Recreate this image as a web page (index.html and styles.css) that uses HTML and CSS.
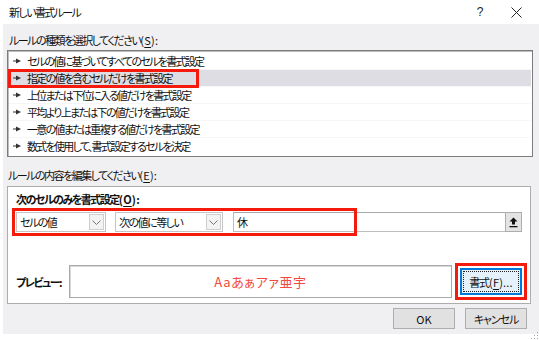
FILE: index.html
```html
<!DOCTYPE html>
<html lang="ja">
<head>
<meta charset="utf-8">
<title>新しい書式ルール</title>
<link rel="stylesheet" href="styles.css">
</head>
<body>
<div class="win">
  <div class="titlebar">
    <span class="title">新しい書式ルール</span>
    <span class="help">?</span>
    <span class="close"><svg width="11" height="11" viewBox="0 0 11 11"><path d="M0.5 0.5 L10.5 10.5 M10.5 0.5 L0.5 10.5" stroke="#222" stroke-width="1" fill="none"/></svg></span>
  </div>
  <div class="body">
    <div class="lbl">ルールの種類を選択してください<span class="lat">(<u>S</u>):</span></div>
    <div class="list">
      <div class="item"><svg class="arr" width="8" height="6" viewBox="0 0 8 6"><rect x="0" y="2.5" width="4" height="1" fill="#333"/><polygon points="3,0.5 8,3 3,5.5" fill="#333"/></svg><span>セルの値に基づいてすべてのセルを書式設定</span></div>
      <div class="item sel"><svg class="arr" width="8" height="6" viewBox="0 0 8 6"><rect x="0" y="2.5" width="4" height="1" fill="#333"/><polygon points="3,0.5 8,3 3,5.5" fill="#333"/></svg><span>指定の値を含むセルだけを書式設定</span><span class="mark mark-item"></span></div>
      <div class="item"><svg class="arr" width="8" height="6" viewBox="0 0 8 6"><rect x="0" y="2.5" width="4" height="1" fill="#333"/><polygon points="3,0.5 8,3 3,5.5" fill="#333"/></svg><span>上位または下位に入る値だけを書式設定</span></div>
      <div class="item"><svg class="arr" width="8" height="6" viewBox="0 0 8 6"><rect x="0" y="2.5" width="4" height="1" fill="#333"/><polygon points="3,0.5 8,3 3,5.5" fill="#333"/></svg><span>平均より上または下の値だけを書式設定</span></div>
      <div class="item"><svg class="arr" width="8" height="6" viewBox="0 0 8 6"><rect x="0" y="2.5" width="4" height="1" fill="#333"/><polygon points="3,0.5 8,3 3,5.5" fill="#333"/></svg><span>一意の値または重複する値だけを書式設定</span></div>
      <div class="item last"><svg class="arr" width="8" height="6" viewBox="0 0 8 6"><rect x="0" y="2.5" width="4" height="1" fill="#333"/><polygon points="3,0.5 8,3 3,5.5" fill="#333"/></svg><span>数式を使用して、書式設定するセルを決定</span></div>
    </div>
    <div class="lbl lbl2">ルールの内容を編集してください<span class="lat">(<u>E</u>):</span></div>
    <div class="group">
      <div class="blbl">次のセルのみを書式設定<span class="lat">(<u>O</u>):</span></div>
      <div class="crow">
        <div class="combo c1"><span class="ctext">セルの値</span><span class="dd"><svg width="9" height="5" viewBox="0 0 9 5"><path d="M0.5 0.5 L4.5 4.5 L8.5 0.5" stroke="#777" stroke-width="1" fill="none"/></svg></span></div>
        <div class="combo c2"><span class="ctext">次の値に等しい</span><span class="dd"><svg width="9" height="5" viewBox="0 0 9 5"><path d="M0.5 0.5 L4.5 4.5 L8.5 0.5" stroke="#777" stroke-width="1" fill="none"/></svg></span></div>
        <div class="inp">休</div>
        <div class="upbtn"><svg width="9" height="11" viewBox="0 0 9 11"><polygon points="4.5,0.5 8.5,4.5 6,4.5 6,7.5 3,7.5 3,4.5 0.5,4.5" fill="#111"/><rect x="0.5" y="9" width="8" height="1.3" fill="#111"/></svg></div>
        <span class="mark mark-row"></span>
      </div>
      <div class="prow">
        <div class="plbl">プレビュー：</div>
        <div class="pbox">Aaあぁアァ亜宇</div>
        <div class="fwrap">
          <button class="btn fbtn"><span class="focus">書式<span class="lat">(<u>F</u>)...</span></span></button>
          <span class="mark mark-fmt"></span>
        </div>
      </div>
    </div>
    <div class="btns">
      <button class="btn okbtn">OK</button>
      <button class="btn">キャンセル</button>
    </div>
  </div>
  <svg class="grip" width="9" height="9" viewBox="0 0 9 9">
    <rect x="7" y="1" width="1" height="1" fill="#a8a8a8"/>
    <rect x="4" y="4" width="1" height="1" fill="#a8a8a8"/>
    <rect x="7" y="4" width="1" height="1" fill="#a8a8a8"/>
    <rect x="1" y="7" width="1" height="1" fill="#a8a8a8"/>
    <rect x="4" y="7" width="1" height="1" fill="#a8a8a8"/>
    <rect x="7" y="7" width="1" height="1" fill="#a8a8a8"/>
  </svg>
</div>
</body>
</html>
```

FILE: styles.css
```css
* { box-sizing: border-box; }
html, body { margin: 0; padding: 0; background: #ffffff; }
body {
  font-family: "Noto Sans CJK JP", sans-serif;
  font-size: 11px;
  color: #111;
  font-feature-settings: "palt" 1;
  font-variant-east-asian: proportional-width;
  letter-spacing: -1.5px;
}
.lat { letter-spacing: 0.2px; }
.win {
  position: relative;
  width: 539px;
  height: 340px;
  background: #ffffff;
  overflow: hidden;
}
.titlebar {
  height: 24px;
  display: flex;
  align-items: center;
  padding-left: 9px;
}
.title { line-height: 16px; letter-spacing: -1.6px; }
.help {
  margin-left: auto;
  width: 12px;
  text-align: center;
  font-family: "Liberation Sans", sans-serif;
  font-size: 12px;
  letter-spacing: 0;
  color: #222;
}
.close {
  margin-left: 25px;
  margin-right: 17px;
  display: flex;
  align-items: center;
}
.body {
  margin-left: 3px;
  height: 310px;
  background: #f0eff2;
  padding: 8px 6px 5px 4px;
  display: flex;
  flex-direction: column;
}
.lbl {
  height: 16px;
  line-height: 16px;
  padding-left: 2px;
}
.lbl2 { margin-top: 10px; padding-left: 1px; }
u { text-decoration: underline; text-underline-offset: 2px; }
.list {
  margin-top: 2px;
  background: #ffffff;
  border: 1px solid #7c7c7c;
  box-shadow: inset 1px 1px 0 #bdbdbd;
  padding: 2px 1px 1px 1px;
}
.item {
  position: relative;
  height: 17px;
  display: flex;
  align-items: center;
  padding-left: 4px;
  border-bottom: 1px solid #f6f5f8;
  line-height: 16px;
  letter-spacing: -1.7px;
}
.item.last { border-bottom-color: transparent; }
.item .arr { margin-right: 6px; flex: none; }
.item.sel { background: #dedde3; }
.mark {
  position: absolute;
  border: 3px solid #f41a0c;
  pointer-events: none;
}
.mark-item { left: -1px; top: -1px; width: 191px; height: 19px; }
.group {
  margin-top: 3px;
  margin-right: 2px;
  background: #ffffff;
  border: 1px solid #adadad;
  padding: 4px 8px 5px 8px;
}
.blbl {
  height: 16px;
  line-height: 16px;
  font-weight: bold;
}
.crow {
  position: relative;
  margin-top: 5px;
  height: 20px;
  display: flex;
}
.combo {
  height: 20px;
  border: 1px solid #c4c4c4;
  background: #ffffff;
  display: flex;
  align-items: center;
  padding-left: 3px;
}
.c1 { width: 90px; }
.c2 { width: 108px; margin-left: 9px; }
.ctext { flex: 1; line-height: 16px; white-space: nowrap; }
.dd {
  width: 15px;
  height: 16px;
  margin-right: 1px;
  border: 1px solid #cfcfcf;
  background: #f3f3f3;
  display: flex;
  align-items: center;
  justify-content: center;
}
.inp {
  width: 273px;
  margin-left: 10px;
  height: 20px;
  border: 1px solid #bdbdbd;
  border-top-color: #a8a8a8;
  padding-left: 3px;
  line-height: 18px;
}
.upbtn {
  width: 17px;
  height: 20px;
  margin-left: -1px;
  border: 1px solid #adadad;
  background: #e4e4e4;
  display: flex;
  align-items: center;
  justify-content: center;
}
.mark-row { left: -4px; top: -4px; width: 345px; height: 28px; }
.prow {
  margin-top: 33px;
  height: 33px;
  display: flex;
  align-items: center;
}
.plbl {
  width: 53px;
  font-weight: bold;
  line-height: 16px;
  white-space: nowrap;
}
.pbox {
  width: 383px;
  height: 33px;
  border: 1px solid #a9a9a9;
  box-shadow: inset 1px 1px 0 #d8d8d8;
  display: flex;
  align-items: center;
  justify-content: center;
  color: #f24a40;
  font-size: 13px;
  letter-spacing: 0.6px;
}
.fwrap {
  position: relative;
  margin-left: 8px;
  display: flex;
}
.btn {
  font: inherit;
  letter-spacing: -1.1px;
  font-feature-settings: "palt" 1;
  color: #111;
  background: #e1e1e1;
  border: 1px solid #adadad;
  width: 62px;
  height: 21px;
  padding: 0;
  line-height: 16px;
}
.okbtn { letter-spacing: 0; }
.fbtn {
  height: 27px;
  border: 1px solid #0078d7;
  box-shadow: inset 0 0 0 1px #0078d7;
  background: #e5f1fb;
  padding: 2px;
  display: flex;
}
.focus {
  flex: 1;
  border: 1px dotted #222;
  display: flex;
  align-items: center;
  justify-content: center;
}
.mark-fmt { left: -5px; top: -5px; width: 72px; height: 37px; }
.btns {
  margin-top: 4px;
  display: flex;
  justify-content: flex-end;
  gap: 10px;
  padding-right: 6px;
}
.grip { position: absolute; right: 0; bottom: 0; }
```
